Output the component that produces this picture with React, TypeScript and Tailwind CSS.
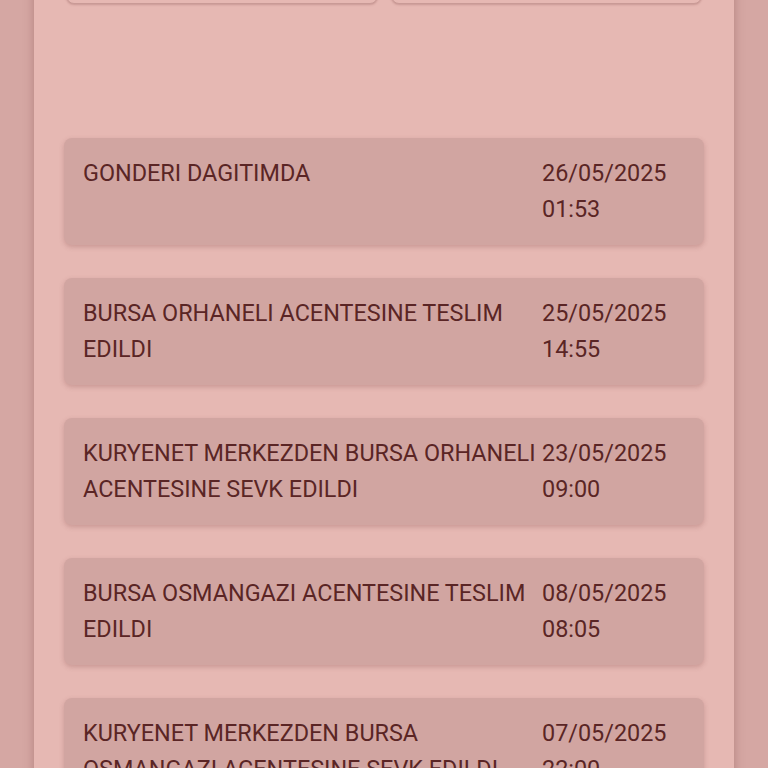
import React from 'react';

interface Step {
  text: string;
  date: string;
  time: string;
}

const steps: Step[] = [
  { text: 'GONDERI DAGITIMDA', date: '26/05/2025', time: '01:53' },
  { text: 'BURSA ORHANELI ACENTESINE TESLIM EDILDI', date: '25/05/2025', time: '14:55' },
  { text: 'KURYENET MERKEZDEN BURSA ORHANELI ACENTESINE SEVK EDILDI', date: '23/05/2025', time: '09:00' },
  { text: 'BURSA OSMANGAZI ACENTESINE TESLIM EDILDI', date: '08/05/2025', time: '08:05' },
  { text: 'KURYENET MERKEZDEN BURSA OSMANGAZI ACENTESINE SEVK EDILDI', date: '07/05/2025', time: '22:00' },
];

const App: React.FC = () => {
  return (
    <div className="h-[768px] overflow-hidden bg-[#d5a7a3] font-['Roboto',sans-serif]">
      <div className="mx-[34px] min-h-[900px] bg-[#e6b8b3] shadow-[0_0_10px_rgba(120,60,60,0.35)] px-[30px] pb-[40px]">
        {/* action buttons, scrolled almost out of view */}
        <div className="grid grid-cols-2 gap-[13px] px-[2px] -mt-[40px]">
          <div className="h-[44px] rounded-lg border border-[#c99a96] bg-[#e6b8b3] shadow-[0_1px_2px_rgba(120,60,60,0.25)]"></div>
          <div className="h-[44px] rounded-lg border border-[#c99a96] bg-[#e6b8b3] shadow-[0_1px_2px_rgba(120,60,60,0.25)]"></div>
        </div>

        <div className="mt-[134px] flex flex-col gap-[33px]">
          {steps.map((s) => (
            <div
              key={s.date + s.time}
              className="flex rounded-lg bg-[#d1a5a1] px-[19px] pt-[17px] pb-[18px] shadow-[0_2px_5px_rgba(120,60,60,0.25)] text-[23.4px] leading-[36px] text-[#5a2525]"
            >
              <div className="flex-1 min-w-0">{s.text}</div>
              <div className="w-[143px] shrink-0">
                <div>{s.date}</div>
                <div>{s.time}</div>
              </div>
            </div>
          ))}
        </div>
      </div>
    </div>
  );
};

export default App;
